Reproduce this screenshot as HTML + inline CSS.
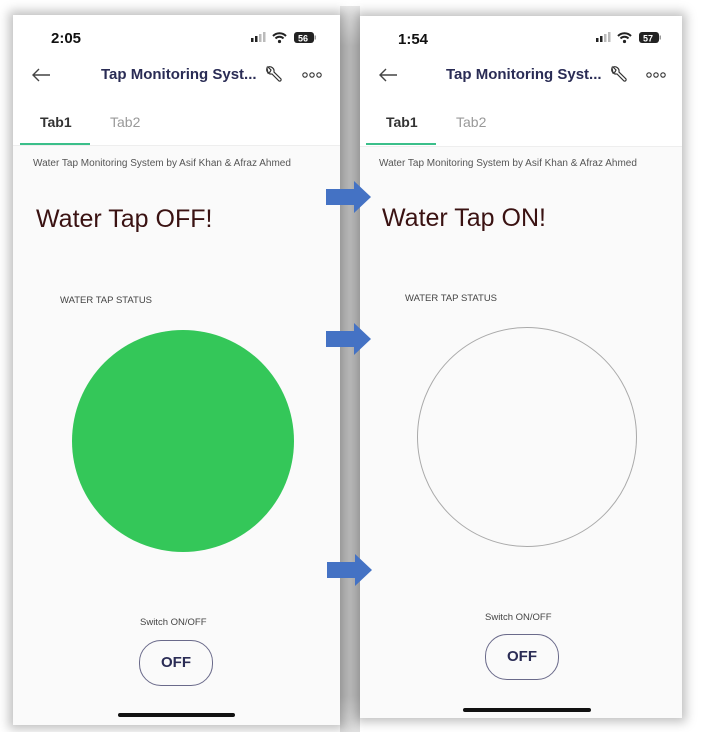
<!DOCTYPE html>
<html><head><meta charset="utf-8"><style>
body{margin:0;width:701px;height:732px;background:#fff;position:relative;overflow:hidden;font-family:"Liberation Sans",sans-serif}
.ph{position:absolute;background:#fafafa;box-shadow:0 0 10px 4px rgba(0,0,0,.25);overflow:hidden}
.hd{position:absolute;left:0;right:0;top:0;height:130px;background:#fff;border-bottom:1px solid #eee}
.t{position:absolute;white-space:nowrap}
.time{font-size:15px;font-weight:bold;color:#111;top:15px}
.title{font-size:15px;font-weight:bold;color:#2a2c55;top:51px}
.tab1{font-size:14px;font-weight:bold;color:#333;top:99px}
.tab2{font-size:14px;color:#999;top:99px}
.ul{position:absolute;height:2px;background:#3bbf8a;top:128px;width:70px}
.sub{font-size:10px;color:#555;top:143px}
.big{font-size:25px;color:#3a1212;top:190px}
.lab{font-size:9.5px;color:#444}
.btn{position:absolute;border:1px solid #6a6a8a;border-radius:22px;width:72px;height:44px;font-size:15px;font-weight:bold;color:#2a2c55;text-align:center;line-height:44px}
.bar{position:absolute;height:4px;border-radius:2px;background:#111}
.arr{position:absolute}
svg{display:block}
</style></head><body>
<div style="position:absolute;left:340px;top:6px;width:20px;height:726px;background:linear-gradient(#e8e8e8,#c0c0c0 40px,#c0c0c0 690px,#e0e0e0)"></div>

<div class="ph" style="left:13px;top:15px;width:327px;height:710px">
 <div class="hd"></div>
 <div class="t time" style="left:38px">2:05</div>
 <svg style="position:absolute;left:238px;top:16px" width="70" height="14"><g fill="#222"><rect x="0" y="7" width="2.5" height="4"/><rect x="4" y="5" width="2.5" height="6"/><rect x="8" y="3" width="2.5" height="8" fill="#bbb"/><rect x="12" y="1" width="2.5" height="10" fill="#bbb"/></g><path d="M22 5a9 9 0 0 1 13 0M24.5 7.5a5.5 5.5 0 0 1 8 0" stroke="#222" stroke-width="2" fill="none"/><circle cx="28.5" cy="10.5" r="1.6" fill="#222"/><rect x="43" y="1" width="20" height="11" rx="3" fill="#222"/><rect x="63.5" y="4.5" width="1.5" height="4" fill="#999"/><text x="47" y="10.5" font-size="9" font-weight="bold" fill="#fff" font-family="Liberation Sans">56</text></svg>
 <svg style="position:absolute;left:18px;top:52px" width="20" height="16"><path d="M19 8H2M8 2L2 8l6 6" stroke="#444" stroke-width="1.4" fill="none"/></svg>
 <div class="t title" style="left:88px">Tap Monitoring Syst...</div>
 <svg style="position:absolute;left:250px;top:50px" width="20" height="20"><path d="M4 3a4.5 4.5 0 0 0 5 6l7 7a1.5 1.5 0 0 0 2-2l-7-7a4.5 4.5 0 0 0-6-5l3 3-1 2-2 1z" stroke="#333" stroke-width="1.2" fill="none"/></svg>
 <svg style="position:absolute;left:289px;top:56px" width="20" height="8"><g stroke="#333" fill="none" stroke-width="1.1"><circle cx="3" cy="4" r="2.2"/><circle cx="10" cy="4" r="2.2"/><circle cx="17" cy="4" r="2.2"/></g></svg>
 <div class="t tab1" style="left:27px">Tab1</div>
 <div class="t tab2" style="left:97px">Tab2</div>
 <div class="ul" style="left:7px"></div>
 <div class="t sub" style="left:20px">Water Tap Monitoring System by Asif Khan &amp; Afraz Ahmed</div>
 <div class="t big" style="left:23px">Water Tap OFF!</div>
 <div class="t lab" style="left:47px;top:280px">WATER TAP STATUS</div>
 <div style="position:absolute;left:59px;top:315px;width:222px;height:222px;border-radius:50%;background:#34c759"></div>
 <div class="t lab" style="left:127px;top:602px">Switch ON/OFF</div>
 <div class="btn" style="left:126px;top:625px">OFF</div>
 <div class="bar" style="left:105px;top:698px;width:117px"></div>
</div>

<div class="ph" style="left:360px;top:16px;width:322px;height:702px">
 <div class="hd"></div>
 <div class="t time" style="left:38px">1:54</div>
 <svg style="position:absolute;left:236px;top:15px" width="70" height="14"><g fill="#222"><rect x="0" y="7" width="2.5" height="4"/><rect x="4" y="5" width="2.5" height="6"/><rect x="8" y="3" width="2.5" height="8" fill="#bbb"/><rect x="12" y="1" width="2.5" height="10" fill="#bbb"/></g><path d="M22 5a9 9 0 0 1 13 0M24.5 7.5a5.5 5.5 0 0 1 8 0" stroke="#222" stroke-width="2" fill="none"/><circle cx="28.5" cy="10.5" r="1.6" fill="#222"/><rect x="43" y="1" width="20" height="11" rx="3" fill="#222"/><rect x="63.5" y="4.5" width="1.5" height="4" fill="#999"/><text x="47" y="10.5" font-size="9" font-weight="bold" fill="#fff" font-family="Liberation Sans">57</text></svg>
 <svg style="position:absolute;left:18px;top:51px" width="20" height="16"><path d="M19 8H2M8 2L2 8l6 6" stroke="#444" stroke-width="1.4" fill="none"/></svg>
 <div class="t title" style="left:86px;top:50px">Tap Monitoring Syst...</div>
 <svg style="position:absolute;left:248px;top:49px" width="20" height="20"><path d="M4 3a4.5 4.5 0 0 0 5 6l7 7a1.5 1.5 0 0 0 2-2l-7-7a4.5 4.5 0 0 0-6-5l3 3-1 2-2 1z" stroke="#333" stroke-width="1.2" fill="none"/></svg>
 <svg style="position:absolute;left:286px;top:55px" width="20" height="8"><g stroke="#333" fill="none" stroke-width="1.1"><circle cx="3" cy="4" r="2.2"/><circle cx="10" cy="4" r="2.2"/><circle cx="17" cy="4" r="2.2"/></g></svg>
 <div class="t tab1" style="left:26px;top:98px">Tab1</div>
 <div class="t tab2" style="left:96px;top:98px">Tab2</div>
 <div class="ul" style="left:6px;top:127px"></div>
 <div class="t sub" style="left:19px;top:142px">Water Tap Monitoring System by Asif Khan &amp; Afraz Ahmed</div>
 <div class="t big" style="left:22px;top:188px">Water Tap ON!</div>
 <div class="t lab" style="left:45px;top:277px">WATER TAP STATUS</div>
 <div style="position:absolute;left:57px;top:311px;width:220px;height:220px;border-radius:50%;border:1px solid #aaa;box-sizing:border-box"></div>
 <div class="t lab" style="left:125px;top:596px">Switch ON/OFF</div>
 <div class="btn" style="left:125px;top:618px">OFF</div>
 <div class="bar" style="left:103px;top:692px;width:128px"></div>
</div>

<svg class="arr" style="left:325px;top:180px" width="48" height="36"><path d="M1 9H29V1L46 17 29 33V25H1z" fill="#4472c4"/></svg>
<svg class="arr" style="left:325px;top:322px" width="48" height="36"><path d="M1 9H29V1L46 17 29 33V25H1z" fill="#4472c4"/></svg>
<svg class="arr" style="left:326px;top:553px" width="48" height="36"><path d="M1 9H29V1L46 17 29 33V25H1z" fill="#4472c4"/></svg>
</body></html>
